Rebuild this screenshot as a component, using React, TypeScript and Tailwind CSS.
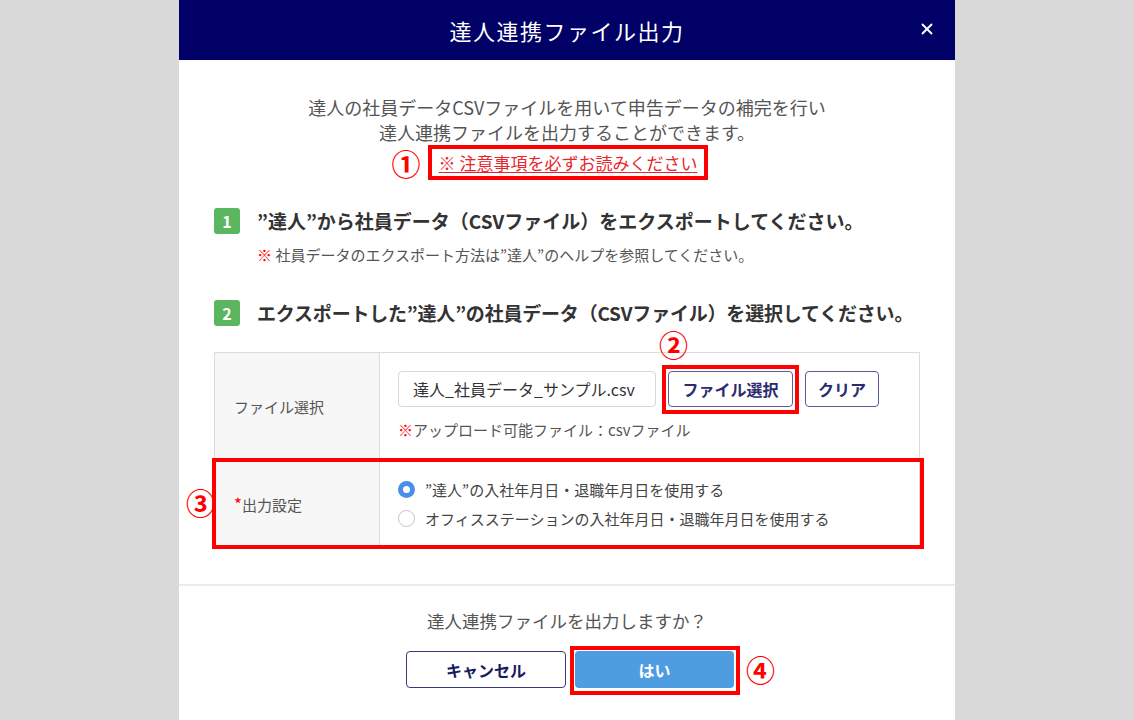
import { X } from "lucide-react";

const jp = { fontFamily: '"Noto Sans CJK JP", "Noto Sans", sans-serif' };

function StepBadge({ n }: { n: number }) {
  return (
    <span className="flex h-[26px] w-[26px] shrink-0 items-center justify-center rounded-[3px] bg-[#5cb660] text-[16px] font-bold text-white">
      {n}
    </span>
  );
}

function Mark({ n, className }: { n: string; className: string }) {
  return (
    <span
      className={`absolute text-[29px] font-bold leading-none text-[#ff0000] ${className}`}
    >
      {n}
    </span>
  );
}

function Radio({ checked, label }: { checked?: boolean; label: string }) {
  return (
    <label className="flex items-center gap-[10px] text-[15px] leading-[29px] text-[#444]">
      {checked ? (
        <span className="flex h-[17px] w-[17px] items-center justify-center rounded-full bg-[#4a8fe7]">
          <span className="h-[7px] w-[7px] rounded-full bg-white" />
        </span>
      ) : (
        <span className="h-[17px] w-[17px] rounded-full border border-[#c4c4c4] bg-white" />
      )}
      {label}
    </label>
  );
}

export default function App() {
  return (
    <div
      className="flex h-[720px] w-[1134px] justify-center overflow-hidden bg-[#d9d9d9]"
      style={jp}
    >
      <div className="flex w-[776px] flex-col bg-white">
        <div className="relative flex h-[60px] shrink-0 items-center justify-center bg-[#000066]">
          <h1 className="text-[22px] tracking-[1.5px] text-white">
            達人連携ファイル出力
          </h1>
          <X
            className="absolute right-[19px] top-[20px] h-[18px] w-[18px] text-white"
            strokeWidth={2.5}
          />
        </div>

        <div className="flex flex-col px-[35px] pb-[38px] pt-[35px]">
          <div className="flex flex-col items-center text-[18px] leading-[25px] text-[#555]">
            <p>達人の社員データCSVファイルを用いて申告データの補完を行い</p>
            <p>達人連携ファイルを出力することができます。</p>
            <div className="relative ml-[2px] mt-[0px]">
              <Mark n="①" className="-left-[36px] top-[4px]" />
              <div className="flex h-[35px] items-center border-4 border-[#ff0000] px-[7px]">
                <a className="text-[17px] text-[#e8262b] underline underline-offset-2">
                  ※ 注意事項を必ずお読みください
                </a>
              </div>
            </div>
          </div>

          <div className="mt-[27px] flex items-center gap-[17px]">
            <StepBadge n={1} />
            <h2 className="whitespace-nowrap text-[19px] font-bold text-[#333]">
              ”達人”から社員データ（CSVファイル）をエクスポートしてください。
            </h2>
          </div>
          <p className="ml-[43px] mt-[8px] text-[15px] leading-[22px] text-[#555]">
            <span className="font-bold text-[#ff0000]">※</span>{" "}
            社員データのエクスポート方法は”達人”のヘルプを参照してください。
          </p>

          <div className="mt-[33px] flex items-center gap-[17px]">
            <StepBadge n={2} />
            <h2 className="whitespace-nowrap text-[19px] font-bold tracking-[-0.2px] text-[#333]">
              エクスポートした”達人”の社員データ（CSVファイル）を選択してください。
            </h2>
          </div>

          <div className="relative mt-[25px]">
            <table className="w-[706px] border-collapse border border-[#dcdcdc]">
              <tbody>
                <tr className="h-[109px]">
                  <td className="w-[165px] border border-[#dcdcdc] bg-[#f7f7f7] pl-[19px] text-[15px] text-[#555]">
                    ファイル選択
                  </td>
                  <td className="border border-[#dcdcdc] pl-[18px] align-top">
                    <div className="mt-[18px] flex items-center gap-[12px]">
                      <div className="flex h-[36px] w-[258px] items-center rounded-[4px] border border-[#d6d6d6] px-[14px] text-[16px] text-[#333]">
                        達人_社員データ_サンプル.csv
                      </div>
                      <div className="relative">
                        <Mark n="②" className="left-[-9px] top-[-41px]" />
                        <div className="pointer-events-none absolute -inset-[6px] -bottom-[7px] border-4 border-[#ff0000]" />
                        <button className="h-[36px] w-[125px] rounded-[4px] border border-[#5b5b9a] bg-white text-[16px] font-bold text-[#2b2b6e]">
                          ファイル選択
                        </button>
                      </div>
                      <button className="h-[36px] w-[74px] rounded-[4px] border border-[#5b5b9a] bg-white text-[16px] font-bold text-[#2b2b6e]">
                        クリア
                      </button>
                    </div>
                    <p className="mt-[12px] text-[15px] text-[#555]">
                      <span className="text-[#ff0000]">※</span>
                      アップロード可能ファイル：csvファイル
                    </p>
                  </td>
                </tr>
                <tr className="h-[84px]">
                  <td className="border border-[#dcdcdc] bg-[#f7f7f7] pl-[19px] text-[15px] text-[#555]">
                    <span className="text-[17px] text-[#ff0000]">*</span>出力設定
                  </td>
                  <td className="border border-[#dcdcdc] pl-[18px]">
                    <Radio checked label="”達人”の入社年月日・退職年月日を使用する" />
                    <Radio label="オフィスステーションの入社年月日・退職年月日を使用する" />
                  </td>
                </tr>
              </tbody>
            </table>
            <div className="pointer-events-none absolute left-[-2px] right-[-4px] top-[106px] h-[91px] border-4 border-[#ff0000]" />
            <Mark n="③" className="left-[-28px] top-[136px]" />
          </div>
        </div>

        <div className="flex flex-col items-center border-t-2 border-[#ececec] pt-[23px]">
          <p className="text-[17.5px] leading-[24px] text-[#555]">
            達人連携ファイルを出力しますか？
          </p>
          <div className="mt-[18px] flex gap-[9px] pl-[6px]">
            <button className="h-[37px] w-[160px] rounded-[4px] border border-[#3a3a80] bg-white text-[16px] font-bold text-[#1a1a5e]">
              キャンセル
            </button>
            <div className="relative">
              <div className="pointer-events-none absolute -inset-[5px] -bottom-[7px] -right-[6px] border-4 border-[#ff0000]" />
              <Mark n="④" className="left-[171px] top-[4px]" />
              <button className="h-[37px] w-[159px] rounded-[4px] bg-[#4d9de0] text-[16px] font-bold text-white">
                はい
              </button>
            </div>
          </div>
        </div>
      </div>
    </div>
  );
}
